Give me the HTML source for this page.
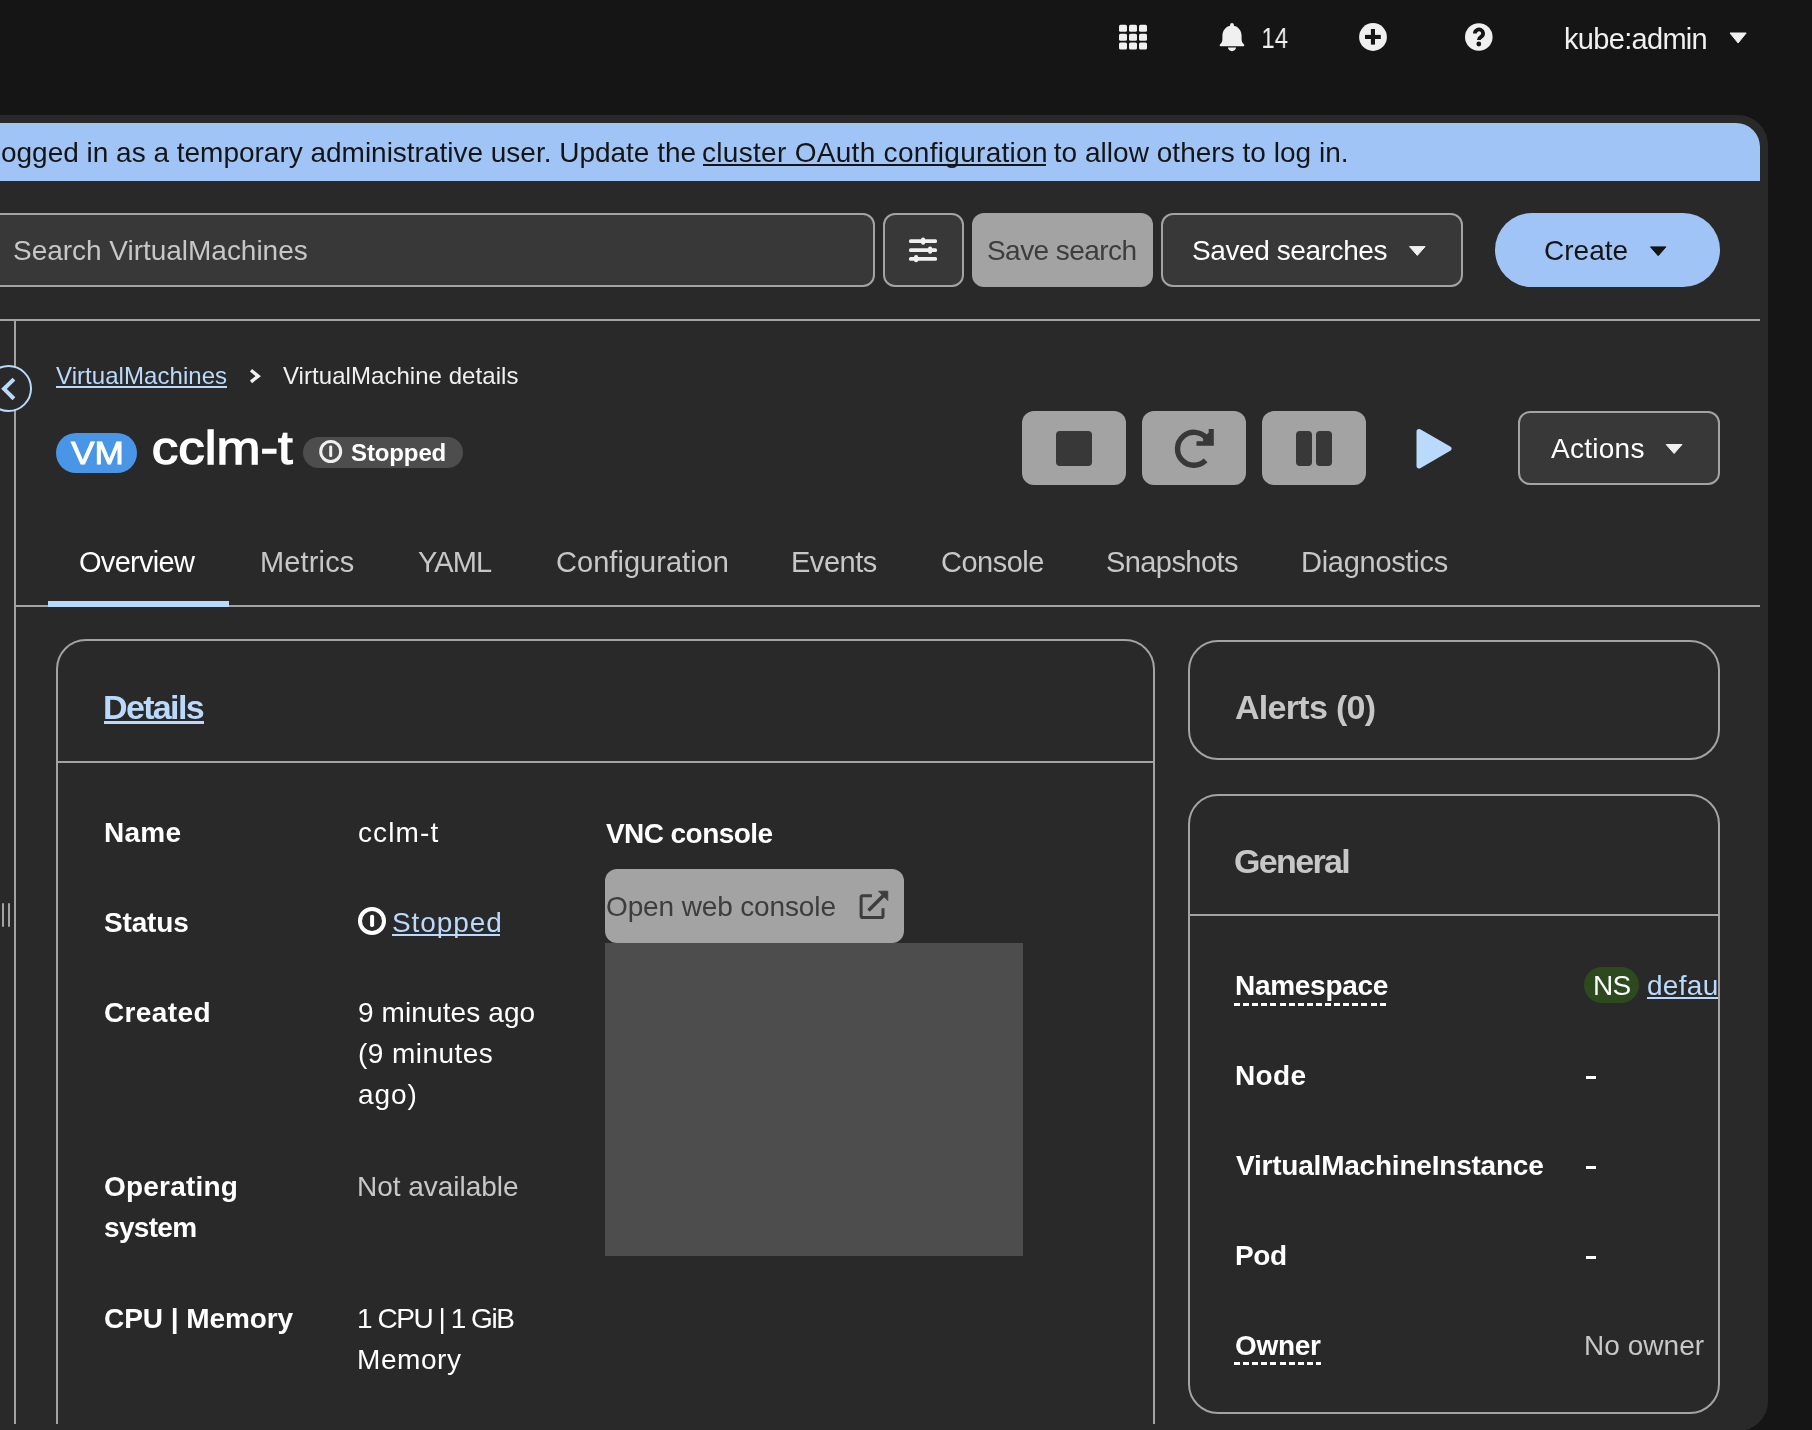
<!DOCTYPE html>
<html><head><meta charset="utf-8"><title>cclm-t · VirtualMachine details</title>
<style>
html,body{margin:0;padding:0;}
body{width:1812px;height:1430px;overflow:hidden;background:#151515;position:relative;font-family:"Liberation Sans", sans-serif;}
.a{position:absolute;box-sizing:border-box;}
.t{position:absolute;line-height:0;white-space:pre;font-family:"Liberation Sans", sans-serif;will-change:transform;}
svg{position:absolute;overflow:visible;}
</style></head><body>
<!-- masthead -->
<div class="a" style="left:0;top:0;width:1812px;height:115px;background:#151515"></div>
<!-- main panel -->
<div class="a" style="left:0;top:115px;width:1768px;height:1316px;background:#292929;border-top-right-radius:30px;border-bottom-right-radius:30px"></div>
<!-- banner -->
<div class="a" style="left:0;top:123px;width:1760px;height:58px;background:#a0c4f5;border-top-right-radius:24px"></div>
<!-- toolbar -->
<div class="a" style="left:-20px;top:213px;width:895px;height:74px;background:#383838;border:2px solid #a3a3a3;border-radius:12px"></div>
<div class="a" style="left:883px;top:213px;width:81px;height:74px;background:#383838;border:2px solid #a3a3a3;border-radius:12px"></div>
<div class="a" style="left:972px;top:213px;width:181px;height:74px;background:#a3a3a3;border-radius:12px"></div>
<div class="a" style="left:1161px;top:213px;width:302px;height:74px;background:#383838;border:2px solid #a3a3a3;border-radius:12px"></div>
<div class="a" style="left:1495px;top:213px;width:225px;height:74px;background:#a0c4f5;border-radius:37px"></div>
<!-- hr + left rail -->
<div class="a" style="left:0;top:319px;width:1760px;height:2px;background:#a3a3a3"></div>
<div class="a" style="left:14px;top:321px;width:2px;height:1103px;background:#a3a3a3"></div>
<div class="a" style="left:2px;top:903px;width:2px;height:24px;background:#a3a3a3;border-radius:1px"></div>
<div class="a" style="left:8px;top:903px;width:2px;height:24px;background:#a3a3a3;border-radius:1px"></div>
<div class="a" style="left:-15px;top:365px;width:47px;height:47px;background:#292929;border:2px solid #b9dafc;border-radius:50%"></div>
<!-- title badges -->
<div class="a" style="left:56px;top:433px;width:81px;height:40px;background:#4a96e6;border-radius:20px"></div>
<div class="a" style="left:303px;top:437px;width:160px;height:31px;background:#4d4d4d;border-radius:16px"></div>
<!-- action buttons -->
<div class="a" style="left:1022px;top:411px;width:104px;height:74px;background:#a3a3a3;border-radius:12px"></div>
<div class="a" style="left:1142px;top:411px;width:104px;height:74px;background:#a3a3a3;border-radius:12px"></div>
<div class="a" style="left:1262px;top:411px;width:104px;height:74px;background:#a3a3a3;border-radius:12px"></div>
<div class="a" style="left:1056px;top:431px;width:36px;height:35px;background:#383838;border-radius:4px"></div>
<div class="a" style="left:1296px;top:431px;width:15.5px;height:35px;background:#383838;border-radius:4px"></div>
<div class="a" style="left:1316px;top:431px;width:15.5px;height:35px;background:#383838;border-radius:4px"></div>
<div class="a" style="left:1518px;top:411px;width:202px;height:74px;background:#383838;border:2px solid #a3a3a3;border-radius:12px"></div>
<!-- tabs -->
<div class="a" style="left:16px;top:605px;width:1744px;height:2px;background:#a3a3a3"></div>
<div class="a" style="left:48px;top:601px;width:181px;height:6px;background:#b9dafc"></div>
<!-- clip area for scroll content -->
<div class="a" style="left:0;top:0;width:1768px;height:1424px;overflow:hidden">
  <div class="a" style="left:56px;top:639px;width:1099px;height:1000px;border:2px solid #a3a3a3;border-radius:30px"></div>
</div>
<div class="a" style="left:58px;top:761px;width:1095px;height:2px;background:#a3a3a3"></div>
<div class="a" style="left:605px;top:869px;width:299px;height:74px;background:#a3a3a3;border-radius:12px"></div>
<div class="a" style="left:605px;top:943px;width:418px;height:313px;background:#4d4d4d"></div>
<div class="a" style="left:1188px;top:640px;width:532px;height:120px;border:2px solid #a3a3a3;border-radius:30px"></div>
<div class="a" style="left:1188px;top:794px;width:532px;height:620px;border:2px solid #a3a3a3;border-radius:30px"></div>
<div class="a" style="left:1190px;top:914px;width:528px;height:2px;background:#a3a3a3"></div>
<div class="a" style="left:1584px;top:967px;width:55px;height:36px;background:#2d4a1e;border-radius:18px"></div>
<div class="a" style="left:1234px;top:1003px;width:154px;height:3px;background:repeating-linear-gradient(90deg,#fff 0 6px,transparent 6px 9.1px)"></div>
<div class="a" style="left:1234px;top:1362px;width:87px;height:3px;background:repeating-linear-gradient(90deg,#fff 0 6px,transparent 6px 9.1px)"></div>
<div class="a" style="left:1768px;top:0;width:44px;height:1430px;background:#151515"></div>
<!-- icons overlay -->
<svg style="left:0;top:0" width="1812" height="1430" viewBox="0 0 1812 1430">
  <!-- grid -->
  <g fill="#f0f0f0">
    <rect x="1119" y="24.8" width="8" height="7" rx="1.5"/><rect x="1129" y="24.8" width="8" height="7" rx="1.5"/><rect x="1139" y="24.8" width="8" height="7" rx="1.5"/>
    <rect x="1119" y="33.7" width="8" height="7" rx="1.5"/><rect x="1129" y="33.7" width="8" height="7" rx="1.5"/><rect x="1139" y="33.7" width="8" height="7" rx="1.5"/>
    <rect x="1119" y="42.5" width="8" height="7" rx="1.5"/><rect x="1129" y="42.5" width="8" height="7" rx="1.5"/><rect x="1139" y="42.5" width="8" height="7" rx="1.5"/>
  </g>
  <!-- bell -->
  <path fill="#f0f0f0" d="M1232 23c1.1 0 1.9.9 1.9 2v.7c4.8 1.1 7.7 5.2 7.7 10.3v3.5c0 2.4 1.2 3.7 2.4 4.9.7.7.3 1.8-.7 1.8h-22.6c-1 0-1.4-1.1-.7-1.8 1.2-1.2 2.4-2.5 2.4-4.9V36c0-5.1 2.9-9.2 7.7-10.3V25c0-1.1.8-2 1.9-2zM1228 47.6h8c0 2.1-1.8 3.6-4 3.6s-4-1.5-4-3.6z"/>
  <!-- plus circle -->
  <circle cx="1373" cy="37" r="13.9" fill="#f0f0f0"/>
  <rect x="1365" y="34.9" width="15.8" height="4.1" fill="#151515"/>
  <rect x="1370.9" y="29" width="4.1" height="15.6" fill="#151515"/>
  <!-- question circle -->
  <circle cx="1478.8" cy="37" r="13.8" fill="#f0f0f0"/>
  <path d="M1474.9 33.4a4.1 3.9 0 1 1 6.4 3.2c-1.6 1-2.5 1.7-2.5 3.3" fill="none" stroke="#151515" stroke-width="3.8" stroke-linecap="butt"/>
  <circle cx="1478.8" cy="44" r="2.4" fill="#151515"/>
  <!-- masthead caret -->
  <path d="M1730 33h16.2l-8.1 10z" fill="#f0f0f0" stroke="#f0f0f0" stroke-width="1" stroke-linejoin="round"/>
  <!-- filter icon -->
  <g fill="#f0f0f0">
    <rect x="909" y="239.2" width="28" height="3.8" rx="1.5"/><rect x="909" y="248.2" width="28" height="3.8" rx="1.5"/><rect x="909" y="256.9" width="28" height="3.8" rx="1.5"/>
    <rect x="921" y="237.5" width="4.2" height="7.3" rx="2"/><rect x="928" y="246.4" width="4.2" height="7.3" rx="2"/><rect x="914" y="254.9" width="4.2" height="7.3" rx="2"/>
  </g>
  <!-- saved searches caret -->
  <path d="M1409.5 246.6h15.6l-7.8 8.8z" fill="#f0f0f0" stroke="#f0f0f0" stroke-width="1" stroke-linejoin="round"/>
  <!-- create caret -->
  <path d="M1650.5 246.9h15.4l-7.7 8.8z" fill="#151515" stroke="#151515" stroke-width="1" stroke-linejoin="round"/>
  <!-- rail chevron -->
  <path d="M12.5 380.5l-8.5 8.3 8.5 8.5" fill="none" stroke="#b9dafc" stroke-width="4" stroke-linecap="square"/>
  <!-- breadcrumb chevron -->
  <path d="M251 370.3l7.2 5.9-7.2 5.6" fill="none" stroke="#f0f0f0" stroke-width="3.4" stroke-linecap="butt" stroke-linejoin="miter"/>
  <!-- label icon -->
  <circle cx="330.7" cy="451.5" r="10" fill="none" stroke="#f0f0f0" stroke-width="3"/>
  <rect x="329.2" y="445.5" width="3" height="11.5" rx="1.3" fill="#f0f0f0"/>
  <!-- restart icon -->
  <path d="M1206.6 438.2A16.45 16.45 0 1 0 1205.6 460.4" fill="none" stroke="#383838" stroke-width="5.4"/>
  <path d="M1208.7 429h5.1v16.8h-17.3v-4.6h12.2z" fill="#383838"/>
  <path d="M1203.5 436.5L1209.2 432.5V442H1203z" fill="#383838"/>
  <!-- play -->
  <path d="M1419 431.5L1449 448.7L1419 466z" fill="#b9dafc" stroke="#b9dafc" stroke-width="5" stroke-linejoin="round"/>
  <!-- actions caret -->
  <path d="M1666.2 444.5h15.8l-7.9 9z" fill="#f0f0f0" stroke="#f0f0f0" stroke-width="1" stroke-linejoin="round"/>
  <!-- status icon -->
  <circle cx="372" cy="921" r="12" fill="none" stroke="#ffffff" stroke-width="4"/>
  <rect x="370.1" y="914.7" width="4" height="12.3" rx="1.8" fill="#ffffff"/>
  <!-- external link -->
  <path d="M871.9 895.7h-9.3a1.5 1.5 0 0 0-1.5 1.5v18.9a1.5 1.5 0 0 0 1.5 1.5h18.9a1.5 1.5 0 0 0 1.5-1.5v-7.8" fill="none" stroke="#3d3d3d" stroke-width="3"/>
  <path d="M868.5 910.5L883.5 895.5" fill="none" stroke="#3d3d3d" stroke-width="3.6"/>
  <path d="M878.5 891.2h9.3v9.3z" fill="#3d3d3d" stroke="#3d3d3d" stroke-width="0.8" stroke-linejoin="round"/>
</svg>
<!-- underlines & dashes -->
<div class="a" style="left:702.7px;top:164px;width:343.3px;height:2px;background:#151515"></div>
<div class="a" style="left:56px;top:386px;width:171px;height:2px;background:#b9dafc"></div>
<div class="a" style="left:104px;top:721px;width:100px;height:3px;background:#b9dafc"></div>
<div class="a" style="left:392px;top:934px;width:108px;height:2px;background:#b9dafc"></div>
<div class="a" style="left:1647px;top:997px;width:71px;height:2px;background:#b9dafc"></div>
<div class="a" style="left:1586px;top:1076px;width:10px;height:2.5px;background:#fff"></div>
<div class="a" style="left:1586px;top:1166px;width:10px;height:2.5px;background:#fff"></div>
<div class="a" style="left:1586px;top:1256px;width:10px;height:2.5px;background:#fff"></div>

<div class="t" style="left:1260.60px;top:38px;font-size:29px;font-weight:400;color:#f0f0f0;letter-spacing:0.000px;transform:scaleX(0.8231);transform-origin:2.00px 0;">14</div>
<div class="t" style="left:1564.00px;top:39px;font-size:29px;font-weight:400;color:#f0f0f0;letter-spacing:-0.689px;">kube:admin</div>
<div class="t" style="left:1.00px;top:153px;font-size:28px;font-weight:400;color:#151515;letter-spacing:-0.012px;">ogged in as a temporary administrative user. Update the </div>
<div class="t" style="left:702.00px;top:153px;font-size:28px;font-weight:400;color:#151515;letter-spacing:0.301px;">cluster OAuth configuration</div>
<div class="t" style="left:1046.22px;top:153px;font-size:28px;font-weight:400;color:#151515;letter-spacing:0.024px;"> to allow others to log in.</div>
<div class="t" style="left:13.30px;top:251px;font-size:28px;font-weight:400;color:#c7c7c7;letter-spacing:-0.023px;">Search VirtualMachines</div>
<div class="t" style="left:987.40px;top:251px;font-size:28px;font-weight:400;color:#3d3d3d;letter-spacing:-0.557px;">Save search</div>
<div class="t" style="left:1192.20px;top:251px;font-size:28px;font-weight:400;color:#ffffff;letter-spacing:-0.407px;">Saved searches</div>
<div class="t" style="left:1543.50px;top:251px;font-size:28px;font-weight:400;color:#151515;letter-spacing:0.006px;">Create</div>
<div class="t" style="left:56.00px;top:376px;font-size:24px;font-weight:400;color:#b9dafc;letter-spacing:0.057px;">VirtualMachines</div>
<div class="t" style="left:283.40px;top:376px;font-size:24px;font-weight:400;color:#f0f0f0;letter-spacing:0.050px;">VirtualMachine details</div>
<div class="t" style="left:70.90px;top:453px;font-size:32px;font-weight:400;color:#ffffff;letter-spacing:0.000px;transform:scaleX(1.1026);transform-origin:0.00px 0;-webkit-text-stroke:0.9px #fff;">VM</div>
<div class="t" style="left:151.60px;top:448px;font-size:46px;font-weight:400;color:#ffffff;letter-spacing:0.000px;transform:scaleX(1.1481);transform-origin:1.00px 0;-webkit-text-stroke:1.3px #fff;">cclm-t</div>
<div class="t" style="left:351.00px;top:453px;font-size:24px;font-weight:700;color:#ffffff;letter-spacing:-0.121px;">Stopped</div>
<div class="t" style="left:1550.90px;top:449px;font-size:28px;font-weight:400;color:#ffffff;letter-spacing:0.263px;">Actions</div>
<div class="t" style="left:79.40px;top:562px;font-size:29px;font-weight:400;color:#ffffff;letter-spacing:-0.702px;">Overview</div>
<div class="t" style="left:259.70px;top:562px;font-size:29px;font-weight:400;color:#c7c7c7;letter-spacing:0.143px;">Metrics</div>
<div class="t" style="left:418.00px;top:562px;font-size:29px;font-weight:400;color:#c7c7c7;letter-spacing:-0.863px;">YAML</div>
<div class="t" style="left:556.00px;top:562px;font-size:29px;font-weight:400;color:#c7c7c7;letter-spacing:0.036px;">Configuration</div>
<div class="t" style="left:791.00px;top:562px;font-size:29px;font-weight:400;color:#c7c7c7;letter-spacing:-0.471px;">Events</div>
<div class="t" style="left:941.00px;top:562px;font-size:29px;font-weight:400;color:#c7c7c7;letter-spacing:-0.512px;">Console</div>
<div class="t" style="left:1106.30px;top:562px;font-size:29px;font-weight:400;color:#c7c7c7;letter-spacing:-0.580px;">Snapshots</div>
<div class="t" style="left:1301.00px;top:562px;font-size:29px;font-weight:400;color:#c7c7c7;letter-spacing:-0.270px;">Diagnostics</div>
<div class="t" style="left:102.60px;top:707px;font-size:34px;font-weight:700;color:#b9dafc;letter-spacing:-1.648px;">Details</div>
<div class="t" style="left:103.60px;top:833px;font-size:28px;font-weight:700;color:#ffffff;letter-spacing:0.270px;">Name</div>
<div class="t" style="left:357.70px;top:833px;font-size:28px;font-weight:400;color:#ffffff;letter-spacing:1.106px;">cclm-t</div>
<div class="t" style="left:606.00px;top:834px;font-size:28px;font-weight:700;color:#ffffff;letter-spacing:-0.573px;">VNC console</div>
<div class="t" style="left:104.40px;top:923px;font-size:28px;font-weight:700;color:#ffffff;letter-spacing:-0.160px;">Status</div>
<div class="t" style="left:391.60px;top:923px;font-size:28px;font-weight:400;color:#b9dafc;letter-spacing:0.926px;">Stopped</div>
<div class="t" style="left:605.50px;top:907px;font-size:28px;font-weight:400;color:#3d3d3d;letter-spacing:-0.130px;">Open web console</div>
<div class="t" style="left:103.60px;top:1013px;font-size:28px;font-weight:700;color:#ffffff;letter-spacing:0.374px;">Created</div>
<div class="t" style="left:357.70px;top:1013px;font-size:28px;font-weight:400;color:#ffffff;letter-spacing:0.107px;">9 minutes ago</div>
<div class="t" style="left:357.70px;top:1054px;font-size:28px;font-weight:400;color:#ffffff;letter-spacing:0.443px;">(9 minutes</div>
<div class="t" style="left:357.70px;top:1095px;font-size:28px;font-weight:400;color:#ffffff;letter-spacing:0.894px;">ago)</div>
<div class="t" style="left:103.60px;top:1187px;font-size:28px;font-weight:700;color:#ffffff;letter-spacing:0.196px;">Operating</div>
<div class="t" style="left:104.40px;top:1228px;font-size:28px;font-weight:700;color:#ffffff;letter-spacing:-0.683px;">system</div>
<div class="t" style="left:356.70px;top:1187px;font-size:28px;font-weight:400;color:#c7c7c7;letter-spacing:-0.034px;">Not available</div>
<div class="t" style="left:103.60px;top:1319px;font-size:28px;font-weight:700;color:#ffffff;letter-spacing:-0.064px;">CPU | Memory</div>
<div class="t" style="left:356.70px;top:1319px;font-size:28px;font-weight:400;color:#ffffff;letter-spacing:-1.454px;">1 CPU | 1 GiB</div>
<div class="t" style="left:356.70px;top:1360px;font-size:28px;font-weight:400;color:#ffffff;letter-spacing:0.577px;">Memory</div>
<div class="t" style="left:1234.60px;top:707px;font-size:34px;font-weight:700;color:#c7c7c7;letter-spacing:-0.694px;">Alerts (0)</div>
<div class="t" style="left:1234.40px;top:861px;font-size:34px;font-weight:700;color:#c7c7c7;letter-spacing:-1.662px;">General</div>
<div class="t" style="left:1234.50px;top:986px;font-size:28px;font-weight:700;color:#ffffff;letter-spacing:-0.285px;">Namespace</div>
<div class="t" style="left:1592.60px;top:986px;font-size:28px;font-weight:400;color:#ffffff;letter-spacing:-0.621px;">NS</div>
<div class="a" style="left:0;top:0;width:1718px;height:1430px;overflow:hidden"><div class="t" style="left:1646.50px;top:986px;font-size:28px;font-weight:400;color:#b9dafc;letter-spacing:0.301px;">defau</div></div>
<div class="t" style="left:1234.50px;top:1076px;font-size:28px;font-weight:700;color:#ffffff;letter-spacing:0.357px;">Node</div>
<div class="t" style="left:1235.50px;top:1166px;font-size:28px;font-weight:700;color:#ffffff;letter-spacing:-0.213px;">VirtualMachineInstance</div>
<div class="t" style="left:1234.70px;top:1256px;font-size:28px;font-weight:700;color:#ffffff;letter-spacing:-0.390px;">Pod</div>
<div class="t" style="left:1234.70px;top:1346px;font-size:28px;font-weight:700;color:#ffffff;letter-spacing:-0.309px;">Owner</div>
<div class="t" style="left:1583.60px;top:1346px;font-size:28px;font-weight:400;color:#c7c7c7;letter-spacing:0.041px;">No owner</div>
</body></html>
